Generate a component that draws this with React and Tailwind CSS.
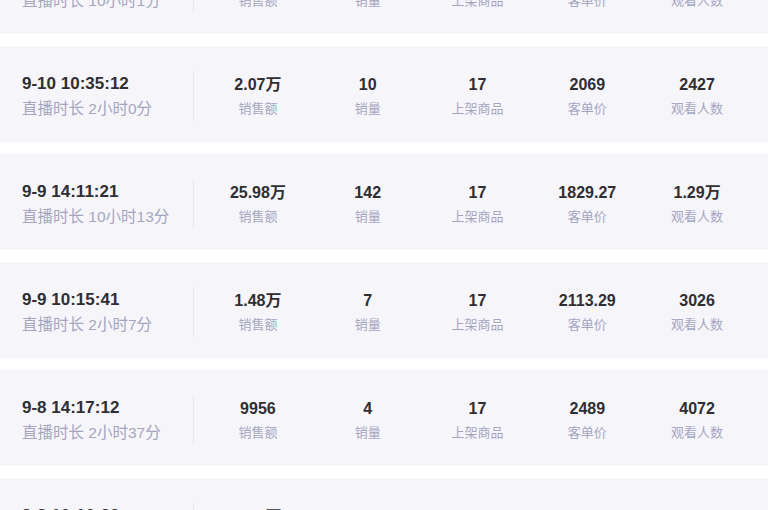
import React from "react";

const rows = [
  { time: "9-10 19:02:45", dur: "10小时1分", v: ["3.62万", "18", "17", "2011", "3518"] },
  { time: "9-10 10:35:12", dur: "2小时0分", v: ["2.07万", "10", "17", "2069", "2427"] },
  { time: "9-9 14:11:21", dur: "10小时13分", v: ["25.98万", "142", "17", "1829.27", "1.29万"] },
  { time: "9-9 10:15:41", dur: "2小时7分", v: ["1.48万", "7", "17", "2113.29", "3026"] },
  { time: "9-8 14:17:12", dur: "2小时37分", v: ["9956", "4", "17", "2489", "4072"] },
  { time: "9-8 10:16:33", dur: "2小时5分", v: ["1.02万", "5", "17", "2040", "2851"] },
];

const labels = ["销售额", "销量", "上架商品", "客单价", "观看人数"];

export default function App() {
  return (
    <div
      className="w-[768px] h-[510px] overflow-hidden bg-white"
      style={{ fontFamily: '"Liberation Sans", "Noto Sans CJK SC", sans-serif' }}
    >
      <div className="flex flex-col gap-3 mt-[-62px]">
        {rows.map((r, i) => (
          <div key={i} className="h-[96px] shrink-0 bg-[#f6f6fa] flex items-center pt-[4px]">
            <div className="w-[193px] pl-[22px] flex flex-col gap-[4px]">
              <div className="text-[17px] leading-[22px] font-bold text-[#2e2e33]">{r.time}</div>
              <div className="text-[15.5px] leading-[20px] text-[#a5a5c1]">直播时长 {r.dur}</div>
            </div>
            <div className="w-px h-[50px] bg-[#e9e9f1]" />
            <div className="flex-1 grid grid-cols-5 pl-[9px] pr-[16px]">
              {r.v.map((val, j) => (
                <div key={j} className="flex flex-col items-center gap-[3px]">
                  <div className="text-[16px] leading-[22px] font-bold text-[#2e2e33]">{val}</div>
                  <div className="text-[13px] leading-[20px] text-[#a5a5c1]">{labels[j]}</div>
                </div>
              ))}
            </div>
          </div>
        ))}
      </div>
    </div>
  );
}
